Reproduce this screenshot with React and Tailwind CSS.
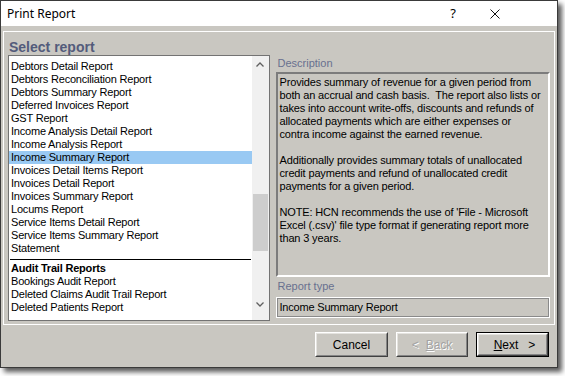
import React from "react";

const REPORTS = [
  "Debtors Detail Report",
  "Debtors Reconciliation Report",
  "Debtors Summary Report",
  "Deferred Invoices Report",
  "GST Report",
  "Income Analysis Detail Report",
  "Income Analysis Report",
  "Income Summary Report",
  "Invoices Detail Items Report",
  "Invoices Detail Report",
  "Invoices Summary Report",
  "Locums Report",
  "Service Items Detail Report",
  "Service Items Summary Report",
  "Statement",
];

const AUDIT = [
  "Bookings Audit Report",
  "Deleted Claims Audit Trail Report",
  "Deleted Patients Report",
];

const DESCRIPTION = [
  "Provides summary of revenue for a given period from",
  "both an accrual and cash basis.  The report also lists or",
  "takes into account write-offs, discounts and refunds of",
  "allocated payments which are either expenses or",
  "contra income against the earned revenue.",
  "",
  "Additionally provides summary totals of unallocated",
  "credit payments and refund of unallocated credit",
  "payments for a given period.",
  "",
  "NOTE: HCN recommends the use of 'File - Microsoft",
  "Excel (.csv)' file type format if generating report more",
  "than 3 years.",
];

const SELECTED = "Income Summary Report";
const font = { fontFamily: '"Liberation Sans", Arial, sans-serif' };

function ListItem({ label }) {
  const active = label === SELECTED;
  return (
    <div
      className={
        active
          ? "h-[13px] leading-[13px] pl-[2px] whitespace-nowrap bg-[#99c9f3] text-black"
          : "h-[13px] leading-[13px] pl-[2px] whitespace-nowrap text-black"
      }
    >
      {label}
    </div>
  );
}

function Button({ children, isDefault, width = "w-[73px]" }) {
  return (
    <div className={isDefault ? `${width} h-[25px] border border-black` : `${width} h-[25px]`}>
      <div className="h-full border border-t-white border-l-white border-r-[#404040] border-b-[#404040]">
        <div className="h-full border border-t-[#e4e3df] border-l-[#e4e3df] border-r-[#858585] border-b-[#858585] flex items-center justify-center text-[12px] text-black">
          {children}
        </div>
      </div>
    </div>
  );
}

export default function App() {
  return (
    <div className="w-[565px] h-[376px] bg-white overflow-hidden" style={font}>
      <div className="w-[558px] h-[368px] border border-[#3a3a3a] flex flex-col shadow-[4px_4px_5px_rgba(0,0,0,0.65)]">
        {/* title bar */}
        <div className="h-[25px] bg-white flex items-center pl-[6px] shrink-0">
          <span className="text-[12px] text-black" style={{ fontFamily: '"Noto Sans", sans-serif' }}>
            Print Report
          </span>
          <span className="ml-auto text-[13px] text-black w-[10px] text-center" style={{ fontFamily: '"Noto Sans", sans-serif' }}>
            ?
          </span>
          <svg className="ml-[32px] mr-[57px]" width="10" height="10" viewBox="0 0 10 10">
            <path d="M0.5 0.5 L9.5 9.5 M9.5 0.5 L0.5 9.5" stroke="#111" strokeWidth="1" />
          </svg>
        </div>

        {/* body */}
        <div className="flex-1 bg-[#c9c7c1] px-[2px] pt-[5px] flex flex-col">
          <div className="border border-white px-[4px] pt-[7px] pb-[3px]">
            <div className="h-[16px] leading-[16px] pl-[1px] text-[14px] font-bold text-[#535b7b]">
              Select report
            </div>
            <div className="flex gap-[6px]">
              {/* report list */}
              <div className="w-[262px] h-[266px] border border-[#737373] bg-white flex text-[11px] tracking-[-0.2px]">
                <div className="flex-1 overflow-hidden pt-[4px]">
                  {REPORTS.map((r) => (
                    <ListItem key={r} label={r} />
                  ))}
                  <div className="h-[7px] flex items-end pb-[2px] px-[1px]">
                    <div className="w-full h-px bg-black" />
                  </div>
                  <div className="h-[13px] leading-[13px] pl-[2px] font-bold text-black">Audit Trail Reports</div>
                  {AUDIT.map((r) => (
                    <ListItem key={r} label={r} />
                  ))}
                </div>
                <div className="w-[17px] bg-[#f0f0f0] flex flex-col">
                  <div className="h-[17px] flex items-center justify-center">
                    <svg width="8" height="5" viewBox="0 0 8 5">
                      <path d="M0.5 4.5 L4 1 L7.5 4.5" stroke="#606060" strokeWidth="1.3" fill="none" />
                    </svg>
                  </div>
                  <div className="flex-1 px-[1px]">
                    <div className="mt-[121px] h-[57px] bg-[#cdcdcd]" />
                  </div>
                  <div className="h-[22px] flex items-start justify-center pt-[4px]">
                    <svg width="8" height="5" viewBox="0 0 8 5">
                      <path d="M0.5 0.5 L4 4 L7.5 0.5" stroke="#606060" strokeWidth="1.3" fill="none" />
                    </svg>
                  </div>
                </div>
              </div>

              {/* right column */}
              <div className="w-[275px] flex flex-col">
                <div className="h-[16px] leading-[16px] pl-[2px] text-[11px] text-[#68708f]">Description</div>
                <div className="mt-[1px] h-[205px] border-2 border-t-[#7c7c7c] border-l-[#7c7c7c] border-r-white border-b-white px-[2px] pt-[2px] text-[11px] tracking-[-0.15px] text-black">
                  {DESCRIPTION.map((line, i) => (
                    <div key={i} className="h-[13px] leading-[13px] whitespace-pre">
                      {line}
                    </div>
                  ))}
                </div>
                <div className="mt-[1px] h-[16px] leading-[16px] pl-[2px] text-[11px] text-[#68708f]">Report type</div>
                <div className="mt-[3px] h-[21px] border border-white">
                  <div className="h-full border border-[#8a8a8a] flex items-center pl-[2px] text-[11px] tracking-[-0.2px] text-black">
                    Income Summary Report
                  </div>
                </div>
              </div>
            </div>
          </div>

          {/* buttons */}
          <div className="mt-[7px] pr-[6px] flex justify-end gap-[8px]">
            <Button>Cancel</Button>
            <Button width="w-[72px]">
              <span className="text-[#a3a3a3] [text-shadow:1px_1px_0_#ffffff]">
                {"<"}
                <span className="ml-[7px] underline">B</span>ack
              </span>
            </Button>
            <Button isDefault>
              <span className="pl-[4px]">
                <span className="underline">N</span>ext
                <span className="ml-[10px]">{">"}</span>
              </span>
            </Button>
          </div>
        </div>
      </div>
    </div>
  );
}
